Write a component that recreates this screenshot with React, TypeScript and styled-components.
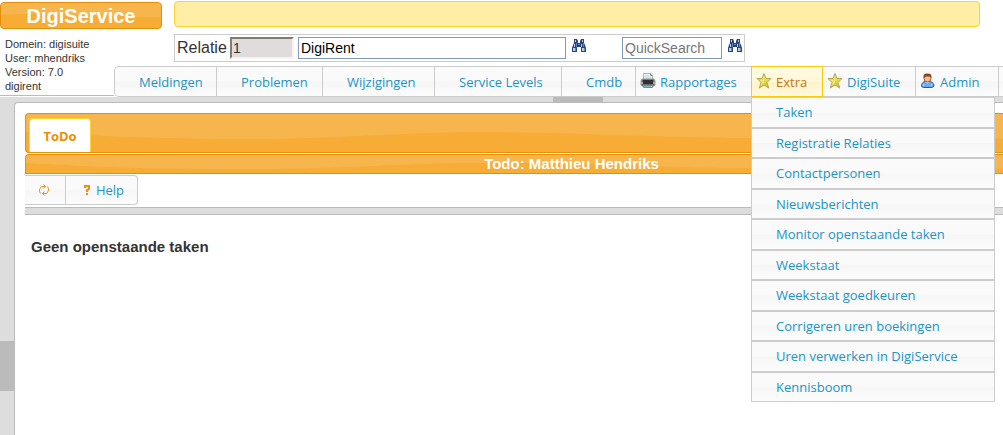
import React from 'react';
import styled, { createGlobalStyle, css } from 'styled-components';

const GlobalStyle = createGlobalStyle`
  *, *::before, *::after { box-sizing: border-box; }
  body {
    margin: 0;
    background: #fff;
    color: #333;
    font-family: "Liberation Sans", Arial, sans-serif;
    overflow-x: hidden;
  }
`;

const menuFont = '"Trebuchet MS", "Open Sans", sans-serif';

const orangeSurface = css`
  position: relative;
  overflow: hidden;
  border: 1px solid #e78f08;
  background: #f6ac35;
  color: #fff;
`;

const graySurface = css`
  background: linear-gradient(#fafafa 0, #fafafa 48%, #f6f6f6 52%, #fcfcfc 100%);
`;

const Page = styled.div`
  display: flex;
  flex-direction: column;
  min-height: 100vh;
`;

const Header = styled.header`
  display: grid;
  grid-template-columns: 114px 60px 1fr;
  grid-template-rows: 32px 34px 31px;
`;

const Brand = styled.h1`
  ${orangeSurface}
  grid-column: 1 / 3;
  width: 162px;
  height: 27px;
  margin: 2px 0 0;
  border-radius: 4px;
  font-size: 20px;
  line-height: 26px;
  text-align: center;
`;

const BrandText = styled.span`
  position: relative;
`;

const Notice = styled.div`
  height: 26px;
  margin: 1px 23px 0 0;
  border: 1px solid #fed22f;
  border-radius: 4px;
  background: #ffeea5;
`;

const Info = styled.div`
  grid-row: 2 / 4;
  padding: 5px 0 0 5px;
  height: 64px;
  border-bottom: 1px solid #bbb;
  font-size: 11px;
  line-height: 14px;
`;

const Search = styled.form`
  grid-column: 3;
  justify-self: start;
  display: flex;
  width: 571px;
  height: 28px;
  margin-top: 2px;
  padding: 2px;
  border: 1px solid #ccc;
`;

const RelationLabel = styled.label`
  flex: none;
  width: 53px;
  font-size: 16px;
  line-height: 22px;
`;

const TextField = styled.input<{ $width: number; $readonly?: boolean }>`
  flex: none;
  width: ${p => p.$width}px;
  height: 22px;
  margin: 0 4px 0 0;
  padding: 0 2px;
  border: 1px solid #7f9db9;
  background: #fff;
  color: #000;
  font: 14px "Liberation Sans", Arial, sans-serif;
  &::placeholder { color: #777; opacity: 1; }
  ${p => p.$readonly && css`
    padding: 0 1px;
    border: 2px solid;
    border-color: #807c73 #f7f3f0 #f7f3f0 #807c73;
    background: #e0dcdc;
    color: #333;
  `}
`;

const FindButton = styled.button<{ $gap?: boolean }>`
  flex: none;
  width: 18px;
  height: 18px;
  margin: 0 ${p => (p.$gap ? 34 : 0)}px 0 0;
  padding: 0 1px;
  border: 0;
  background: none;
  svg { display: block; }
`;

const MenuBar = styled.ul`
  grid-column: 2 / 4;
  display: flex;
  height: 31px;
  margin: 0;
  padding: 0;
  list-style: none;
  border: 1px solid #ccc;
  border-right: 0;
  border-radius: 5px 0 0 5px;
  ${graySurface}
`;

const MenuItem = styled.li<{ $width: number; $active?: boolean }>`
  position: relative;
  flex: none;
  width: ${p => p.$width}px;
  border-right: 1px solid #ccc;
  ${p => p.$active && css`
    margin: -1px 0 -1px -1px;
    border: 1px solid #fbcb09;
    background: linear-gradient(#fffae2 0, #fff8dc 48%, #fdf3cb 52%, #fff9e0 100%);
  `}
`;

const MenuLink = styled.a<{ $active?: boolean }>`
  display: flex;
  align-items: center;
  height: 29px;
  padding-left: 4px;
  color: ${p => (p.$active ? '#c77405' : '#1c94c4')};
  font: 13px/20px ${menuFont};
  text-decoration: none;
  white-space: nowrap;
`;

const IconSlot = styled.span`
  flex: none;
  width: 20px;
  height: 20px;
  svg { display: block; }
`;

const Dropdown = styled.ul`
  position: absolute;
  z-index: 5;
  top: 30px;
  left: -1px;
  display: flex;
  flex-direction: column;
  width: 244px;
  height: 305px;
  margin: 0;
  padding: 0;
  list-style: none;
  border: 1px solid #ccc;
  border-top: 0;
`;

const DropdownItem = styled.li`
  flex: 1;
  display: flex;
  align-items: center;
  padding-left: 24px;
  border-top: 1px solid #ccc;
  border-bottom: 1px solid #ccc;
  ${graySurface}
  &:last-child { border-bottom: 0; }
`;

const DropdownLink = styled.a`
  color: #1c94c4;
  font: 13px/20px ${menuFont};
  text-decoration: none;
  white-space: nowrap;
`;

const Workspace = styled.div`
  flex: 1;
  display: grid;
  grid-template-columns: 14px 1fr;
  grid-template-rows: 5px 1fr;
  background: #ddd;
`;

const TopResizer = styled.div`
  grid-column: 1 / 3;
  padding-left: 553px;
`;

const SideResizer = styled.div`
  padding-top: 239px;
`;

const Toggler = styled.div<{ $vertical?: boolean }>`
  width: ${p => (p.$vertical ? '14px' : '50px')};
  height: ${p => (p.$vertical ? '50px' : '5px')};
  background: #bbb;
`;

const Panel = styled.main`
  min-width: 0;
  padding: 10px 0 0 10px;
  border: 1px solid #bbb;
  border-width: 1px 0 0 1px;
  border-radius: 4px 0 0 0;
  background: #fff;
`;

const TabStrip = styled.div`
  ${orangeSurface}
  height: 40px;
  padding: 4px 0 0 3px;
  border-right: 0;
  border-radius: 4px 0 0 4px;
`;

const Tab = styled.button`
  position: relative;
  width: 62px;
  height: 35px;
  padding: 0;
  border: 1px solid #fed22f;
  border-bottom: 0;
  border-radius: 4px 4px 0 0;
  background: #fff;
  color: #eb8f00;
  font: bold 13px/33px ${menuFont};
`;

const Title = styled.h2`
  ${orangeSurface}
  height: 20px;
  margin: 1px 0 0;
  padding-left: 114px;
  border-right: 0;
  border-radius: 4px 0 0 0;
  font-size: 15px;
  line-height: 18px;
  text-align: center;
  span { position: relative; }
`;

const Toolbar = styled.div`
  display: flex;
  width: 113px;
  height: 30px;
  margin-top: 1px;
  border: 1px solid #ccc;
  border-left: 0;
  border-radius: 0 4px 4px 0;
  ${graySurface}
`;

const ToolButton = styled.button<{ $width: number }>`
  display: flex;
  align-items: center;
  justify-content: flex-end;
  gap: 5px;
  width: ${p => p.$width}px;
  padding: 0 13px 0 0;
  border: 0;
  background: none;
  color: #1c94c4;
  font: 13px/20px ${menuFont};
  & + & { border-left: 1px solid #ccc; }
`;

const Splitter = styled.div`
  height: 8px;
  margin-top: 2px;
  border: 1px solid #bbb;
  border-width: 1px 0;
  background: #ddd;
`;

const Message = styled.p`
  margin: 22px 0 0 6px;
  font-size: 15px;
  font-weight: bold;
  line-height: 20px;
`;

const WaveSvg = styled.svg`
  position: absolute;
  top: 0;
  left: 0;
`;

const Wave = ({ d }: { d: string }) => (
  <WaveSvg width="1200" height="38" aria-hidden="true">
    <path d={d} fill="#f7b64d" />
  </WaveSvg>
);

const Binoculars = () => (
  <svg width="16" height="16" viewBox="0 0 16 16" aria-hidden="true">
    <path d="M3 1h3l1 2v2h2V3l1-2h3v4l1 2 1 3v4h-5V9H6v5H1v-4l1-3 1-2z" fill="#27457f" />
    <path d="M4 2h1v2H4zM11 2h1v2h-1zM3 6h1v3H3zM10 6h1v3h-1zM2 10h2v3H2zM11 10h2v3h-2z" fill="#b9cdea" />
    <path d="M5 5h1v4H5zM12 5h1v4h-1zM4 10h1v3H4zM13 10h1v3h-1zM7 6h2v1H7z" fill="#6486bd" />
    <path d="M6 7h1v2H6zM9 7h1v2H9z" fill="#172f64" />
  </svg>
);

const Printer = () => (
  <svg width="16" height="18" viewBox="0 0 16 18" aria-hidden="true">
    <path d="M3.5 8V1.5h7l2 2V8z" fill="#e9f3f3" stroke="#9fb5b6" />
    <path d="M10.5 1.5v2h2" fill="#fff" stroke="#7c9092" />
    <path d="M5 4h4M5 6h6" stroke="#b6d4d3" />
    <path d="M2 7h12l1 2v4l-1 1H2l-1-1V9z" fill="#6a686e" stroke="#98989c" />
    <path d="M3 8h10v4H3z" fill="#323035" />
    <path d="M3.500 13.500h9v2h-9z" fill="#d8dfdf" stroke="#85898a" />
    <path d="M4 14.5h7" stroke="#78b6b3" />
    <path d="M1 11h2M13 11h2" stroke="#ddd" />
  </svg>
);

const Star = () => (
  <svg width="16" height="18" viewBox="0 0 16 18" aria-hidden="true">
    <defs>
      <linearGradient id="starFill" x1="0" y1="0" x2="0" y2="1">
        <stop offset="0" stopColor="#f3ec7d" />
        <stop offset="1" stopColor="#d7c027" />
      </linearGradient>
    </defs>
    <path d="M8 1.5l2 5h5l-4 4 1.7 5.5L8 13l-4.7 3L5 10.5l-4-4h5z" fill="url(#starFill)" stroke="#b5a64a" />
    <path d="M8 4v7l-4 3 2-4-3-2h4z" fill="#f5ee8a" opacity=".7" />
  </svg>
);

const User = () => (
  <svg width="16" height="18" viewBox="0 0 16 18" aria-hidden="true">
    <path d="M5 9.5h5c3 .5 4 3 4 4.5-1 1.5-3 1.5-4 1.5H5c-2 0-3.5-.5-3.5-1.5C1.5 12 2.5 10 5 9.5z" fill="#70a9ed" stroke="#2456a9" />
    <path d="M5.5 9.5l2 2 2-2" fill="#eff5ff" />
    <path d="M3.5 12v2M11.5 12v2" stroke="#bfdbff" />
    <circle cx="7.5" cy="6.5" r="3.5" fill="#f2bd8e" stroke="#a45d2f" />
    <path d="M3.5 6C3 2 5.5 1.5 7.5 1.5S12 2 11.5 6L10 4.5H6z" fill="#8a451d" />
  </svg>
);

const Refresh = () => (
  <svg width="16" height="14" viewBox="0 0 16 14" fill="none" stroke="#ef8c08" aria-hidden="true">
    <path d="M4.5 10.5l-1-2v-2l2-3h4M7.5 1.500l2 2-2 2M11.500 3.500l1 2v2l-2 3h-4M8.500 8.500l-2 2 2 2" />
  </svg>
);

const QuestionMark = () => (
  <svg width="7" height="10" viewBox="0 0 7 10" fill="none" stroke="#ef8c08" strokeWidth="2" aria-hidden="true">
    <path d="M1 3V1h4v3L3 5v2M3 8v2" />
  </svg>
);

type Entry = { label: string; width: number; icon?: React.ReactNode; children?: string[] };

const entries: Entry[] = [
  { label: 'Meldingen', width: 102 },
  { label: 'Problemen', width: 106 },
  { label: 'Wijzigingen', width: 112 },
  { label: 'Service Levels', width: 127 },
  { label: 'Cmdb', width: 74 },
  { label: 'Rapportages', width: 116, icon: <Printer /> },
  {
    label: 'Extra',
    width: 72,
    icon: <Star />,
    children: [
      'Taken',
      'Registratie Relaties',
      'Contactpersonen',
      'Nieuwsberichten',
      'Monitor openstaande taken',
      'Weekstaat',
      'Weekstaat goedkeuren',
      'Corrigeren uren boekingen',
      'Uren verwerken in DigiService',
      'Kennisboom',
    ],
  },
  { label: 'DigiSuite', width: 93, icon: <Star /> },
  { label: 'Admin', width: 83, icon: <User /> },
];

export default function App() {
  return (
    <Page>
      <GlobalStyle />
      <Header>
        <Brand>
          <Wave d="M0 0H162V14C110 15 60 8 0 12z" />
          <BrandText>DigiService</BrandText>
        </Brand>
        <Notice role="status" />
        <Info>
          <div>Domein: digisuite</div>
          <div>User: mhendriks</div>
          <div>Version: 7.0</div>
          <div>digirent</div>
        </Info>
        <Search onSubmit={e => e.preventDefault()}>
          <RelationLabel htmlFor="relation">Relatie</RelationLabel>
          <TextField id="relation" $width={64} $readonly readOnly defaultValue="1" />
          <TextField aria-label="Relatie naam" $width={268} defaultValue="DigiRent" />
          <FindButton type="button" aria-label="Zoek relatie" $gap><Binoculars /></FindButton>
          <TextField aria-label="QuickSearch" $width={100} placeholder="QuickSearch" />
          <FindButton aria-label="Zoeken"><Binoculars /></FindButton>
        </Search>
        <MenuBar>
          {entries.map(e => (
            <MenuItem key={e.label} $width={e.width} $active={!!e.children}>
              <MenuLink href="#" $active={!!e.children}>
                <IconSlot>{e.icon}</IconSlot>
                {e.label}
              </MenuLink>
              {e.children && (
                <Dropdown>
                  {e.children.map(c => (
                    <DropdownItem key={c}><DropdownLink href="#">{c}</DropdownLink></DropdownItem>
                  ))}
                </Dropdown>
              )}
            </MenuItem>
          ))}
        </MenuBar>
      </Header>
      <Workspace>
        <TopResizer><Toggler /></TopResizer>
        <SideResizer><Toggler $vertical /></SideResizer>
        <Panel>
          <TabStrip>
            <Wave d="M0 0H1200V20C1000 26 820 26 726 24C620 23 540 18 455 18C380 18 300 26 200 25C120 24 70 22 0 18z" />
            <Tab>ToDo</Tab>
          </TabStrip>
          <Title>
            <Wave d="M0 0H1200V10C900 16 780 14 700 13C600 11 540 8 455 8C380 8 300 15 200 14C120 14 70 12 0 8z" />
            <span>Todo: Matthieu Hendriks</span>
          </Title>
          <Toolbar>
            <ToolButton $width={40} aria-label="Vernieuwen"><Refresh /></ToolButton>
            <ToolButton $width={72}><QuestionMark />Help</ToolButton>
          </Toolbar>
          <Splitter />
          <Message>Geen openstaande taken</Message>
        </Panel>
      </Workspace>
    </Page>
  );
}
